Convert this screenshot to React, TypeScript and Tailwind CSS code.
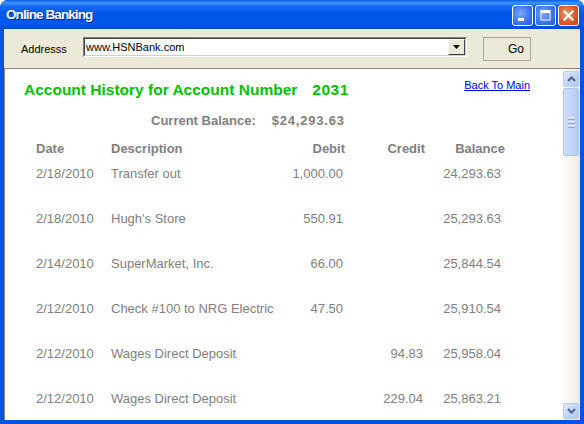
import React from 'react';

const rows = [
  { date: '2/18/2010', desc: 'Transfer out', debit: '1,000.00', credit: '', balance: '24,293.63' },
  { date: '2/18/2010', desc: "Hugh's Store", debit: '550.91', credit: '', balance: '25,293.63' },
  { date: '2/14/2010', desc: 'SuperMarket, Inc.', debit: '66.00', credit: '', balance: '25,844.54' },
  { date: '2/12/2010', desc: 'Check #100 to NRG Electric', debit: '47.50', credit: '', balance: '25,910.54' },
  { date: '2/12/2010', desc: 'Wages Direct Deposit', debit: '', credit: '94.83', balance: '25,958.04' },
  { date: '2/12/2010', desc: 'Wages Direct Deposit', debit: '', credit: '229.04', balance: '25,863.21' },
];

function CaptionButton({ kind }: { kind: 'min' | 'max' | 'close' }) {
  const bg =
    kind === 'close'
      ? 'bg-[radial-gradient(circle_at_40%_40%,#F39A78_0%,#E2552C_55%,#C9401C_100%)]'
      : 'bg-[radial-gradient(circle_at_40%_40%,#7FA8FA_0%,#3C78EE_55%,#2459D8_100%)]';
  return (
    <div className={`w-[21px] h-[21px] rounded-[3px] border border-white flex items-center justify-center ${bg}`}>
      <svg width="13" height="13" viewBox="0 0 13 13">
        {kind === 'min' && <rect x="2" y="9" width="6" height="3" fill="#fff" />}
        {kind === 'max' && (
          <>
            <rect x="2" y="1.5" width="9" height="9.5" fill="none" stroke="#fff" strokeWidth="1" />
            <rect x="2" y="1.5" width="9" height="2.5" fill="#fff" />
          </>
        )}
        {kind === 'close' && (
          <path d="M2.5 2.5 L10.5 10.5 M10.5 2.5 L2.5 10.5" stroke="#fff" strokeWidth="2.2" strokeLinecap="square" />
        )}
      </svg>
    </div>
  );
}

function ScrollButton({ up }: { up: boolean }) {
  return (
    <div className="w-[16px] h-[16px] shrink-0 rounded-[2px] border border-[#B9CBF5] bg-[linear-gradient(135deg,#E1EAFE_0%,#C3D4FB_50%,#B1C6F6_100%)] flex items-center justify-center">
      <svg width="9" height="6" viewBox="0 0 9 6">
        <path d={up ? 'M1 5 L4.5 1.5 L8 5' : 'M1 1 L4.5 4.5 L8 1'} fill="none" stroke="#4D6185" strokeWidth="2" />
      </svg>
    </div>
  );
}

export default function App() {
  return (
    <div
      className="w-[584px] h-[424px] flex flex-col bg-[#0553E3] rounded-t-[8px] overflow-hidden"
      style={{ fontFamily: '"Liberation Sans", Arial, sans-serif' }}
    >
      {/* title bar */}
      <div className="h-[29px] shrink-0 flex items-center pl-[6px] pr-[5px] bg-[linear-gradient(180deg,#0A5CE8_0%,#3D95FF_10%,#1468F2_22%,#0056E8_50%,#0058EE_85%,#0047CC_100%)]">
        <span className="text-white font-bold text-[13.5px] tracking-[-0.9px] [text-shadow:1px_1px_0_#0A2A8A] mt-[1px]">
          Online Banking
        </span>
        <div className="ml-auto flex gap-[2px] mt-[1px]">
          <CaptionButton kind="min" />
          <CaptionButton kind="max" />
          <CaptionButton kind="close" />
        </div>
      </div>

      <div className="flex-1 min-h-0 flex px-[4px] pb-[4px]">
        <div className="flex-1 min-h-0 flex flex-col bg-[#ECE9D8]">
          {/* address toolbar */}
          <div className="h-[39px] shrink-0 flex items-start pt-[8px]">
            <span className="ml-[17px] w-[62px] text-[11px] text-black mt-[4px]">Addresss</span>
            <div className="w-[384px] h-[20px] flex border border-t-[#808080] border-l-[#808080] border-b-white border-r-white">
              <div className="flex-1 flex border border-t-[#404040] border-l-[#404040] border-b-[#D4D0C8] border-r-[#D4D0C8] bg-white">
                <span className="flex-1 text-[11px] text-black pl-[1px] leading-[16px]">www.HSNBank.com</span>
                <div className="w-[17px] h-[16px] bg-[#ECE9D8] border border-t-white border-l-white border-b-[#404040] border-r-[#404040] flex items-center justify-center">
                  <svg width="7" height="4" viewBox="0 0 7 4">
                    <path d="M0 0 H7 L3.5 4 Z" fill="#000" />
                  </svg>
                </div>
              </div>
            </div>
            <div className="ml-[16px] w-[48px] h-[24px] border border-[#ACA899] flex items-center justify-end pr-[6px]">
              <span className="text-[12px] text-black">Go</span>
            </div>
          </div>

          {/* content */}
          <div className="flex-1 min-h-0 flex border-t border-l border-[#8A887C]">
            <div className="flex-1 min-h-0 bg-white overflow-hidden">
              <div className="flex items-start pt-[8px]">
                <div className="ml-[19px] mt-[3px] text-[15.5px] font-bold text-[#00C000] leading-[20px]">
                  Account History for Account Number
                  <span className="ml-[15px] tracking-[0.5px]">2031</span>
                </div>
                <span className="ml-auto mr-[33px] text-[11px] text-[#0000FF] underline leading-[13px] mt-[2px]">
                  Back To Main
                </span>
              </div>

              <div className="flex mt-[11px] text-[13px] font-bold text-[#808080] leading-[20px]">
                <span className="ml-[146px]">Current Balance:</span>
                <span className="ml-[16px] tracking-[0.8px]">$24,293.63</span>
              </div>

              <div className="flex mt-[8px] pl-[31px] text-[13px] font-bold text-[#808080] leading-[20px]">
                <span className="w-[75px]">Date</span>
                <span className="w-[167px]">Description</span>
                <span className="w-[67px] text-right">Debit</span>
                <span className="w-[80px] text-right">Credit</span>
                <span className="w-[80px] text-right">Balance</span>
              </div>

              <div className="mt-[5px]">
                {rows.map((r, i) => (
                  <div key={i} className="h-[45px] flex items-start pl-[31px] text-[13px] text-[#808080] leading-[20px]">
                    <span className="w-[75px]">{r.date}</span>
                    <span className="w-[167px] whitespace-nowrap">{r.desc}</span>
                    <span className="w-[65px] text-right">{r.debit}</span>
                    <span className="w-[80px] text-right">{r.credit}</span>
                    <span className="w-[78px] text-right">{r.balance}</span>
                  </div>
                ))}
              </div>
            </div>

            {/* scrollbar */}
            <div className="w-[17px] flex flex-col pt-[2px] pb-[1px] pr-[1px] bg-[linear-gradient(90deg,#FBFBF8_0%,#F3F1EA_60%,#EDEBE2_100%)]">
              <ScrollButton up />
              <div className="mt-[1px] w-[16px] h-[68px] shrink-0 rounded-[2px] border border-[#B3C6F2] bg-[linear-gradient(90deg,#CFDDFD_0%,#C2D3FB_50%,#B5C9F7_100%)] flex flex-col items-center justify-center gap-[1px]">
                <div className="w-[7px] h-[1px] bg-[#EEF3FE]" />
                <div className="w-[7px] h-[1px] bg-[#8CA7E4]" />
                <div className="w-[7px] h-[1px] bg-[#EEF3FE]" />
                <div className="w-[7px] h-[1px] bg-[#8CA7E4]" />
                <div className="w-[7px] h-[1px] bg-[#EEF3FE]" />
                <div className="w-[7px] h-[1px] bg-[#8CA7E4]" />
              </div>
              <div className="flex-1" />
              <ScrollButton up={false} />
            </div>
          </div>
        </div>
      </div>
    </div>
  );
}
